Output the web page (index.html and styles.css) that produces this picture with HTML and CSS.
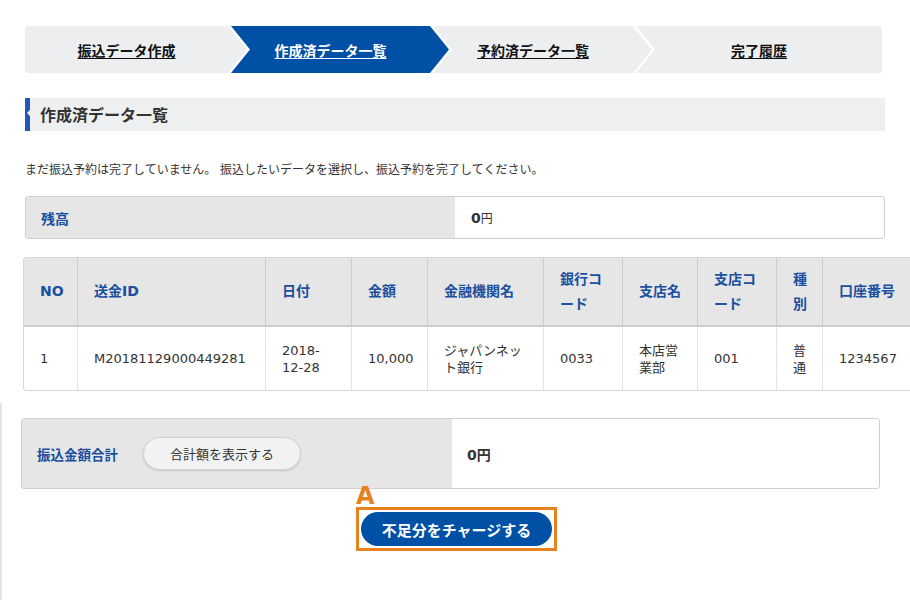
FILE: index.html
```html
<!DOCTYPE html>
<html lang="ja">

<head>
    <meta charset="UTF-8">
    <meta name="viewport" content="width=device-width, initial-scale=1.0">
    <title>作成済データ一覧</title>
    <link rel="stylesheet" href="styles.css">
</head>

<body>
    <div class="page">
        <nav class="steps">
            <a class="step step-first" href="#"><span>振込データ作成</span></a>
            <a class="step step-mid step-active" href="#"><span>作成済データ一覧</span></a>
            <a class="step step-mid" href="#"><span>予約済データ一覧</span></a>
            <a class="step step-last" href="#"><span>完了履歴</span></a>
        </nav>

        <h2 class="heading">作成済データ一覧</h2>

        <p class="lead">まだ振込予約は完了していません。 振込したいデータを選択し、振込予約を完了してください。</p>

        <div class="balance">
            <div class="balance-label">残高</div>
            <div class="balance-value"><b>0</b>円</div>
        </div>

        <div class="table-wrap">
            <table class="list">
                <colgroup>
                    <col style="width: 54px">
                    <col style="width: 188px">
                    <col style="width: 86px">
                    <col style="width: 76px">
                    <col style="width: 116px">
                    <col style="width: 79px">
                    <col style="width: 75px">
                    <col style="width: 79px">
                    <col style="width: 46px">
                    <col style="width: 110px">
                </colgroup>
                <thead>
                    <tr>
                        <th>NO</th>
                        <th>送金ID</th>
                        <th>日付</th>
                        <th>金額</th>
                        <th>金融機関名</th>
                        <th>銀行コード</th>
                        <th>支店名</th>
                        <th>支店コード</th>
                        <th>種別</th>
                        <th>口座番号</th>
                    </tr>
                </thead>
                <tbody>
                    <tr>
                        <td>1</td>
                        <td>M20181129000449281</td>
                        <td>2018-<wbr>12-28</td>
                        <td>10,000</td>
                        <td>ジャパンネット銀行</td>
                        <td>0033</td>
                        <td>本店営業部</td>
                        <td>001</td>
                        <td>普通</td>
                        <td>1234567</td>
                    </tr>
                </tbody>
            </table>
        </div>
    </div>

    <div class="summary">
        <div class="total">
            <div class="total-label">
                <span>振込金額合計</span>
                <button class="btn-sum">合計額を表示する</button>
            </div>
            <div class="total-value">0円</div>
        </div>

        <div class="charge-area">
            <div class="charge">
                <div class="mark">A</div>
                <div class="mark-box">
                    <button class="btn-charge">不足分をチャージする</button>
                </div>
            </div>
        </div>
    </div>
</body>

</html>
```

FILE: styles.css
```css
html, body {
    overflow-x: hidden;
}
body {
    margin: 0;
    font-family: "DejaVu Sans", "Noto Sans CJK JP", sans-serif;
    color: #333;
    background-color: #fff;
}
.page {
    padding: 26px 25px 0;
}

/* step bar */
.steps {
    display: flex;
    height: 47px;
    margin-right: 3px;
    border-radius: 3px;
    overflow: hidden;
}
.step {
    display: flex;
    align-items: center;
    justify-content: center;
    background-color: #edeef0;
    color: #111;
    font-family: "Noto Sans CJK JP", sans-serif;
    font-size: 14px;
    font-weight: bold;
    text-decoration: none;
}
.step span {
    text-decoration: underline;
    text-underline-offset: 2px;
}
.step-first {
    width: 222px;
    padding-right: 19px;
    box-sizing: border-box;
    clip-path: polygon(0 0, calc(100% - 19px) 0, 100% 50%, calc(100% - 19px) 100%, 0 100%);
}
.step-mid {
    width: 218px;
    margin-left: -16px;
    padding-right: 19px;
    box-sizing: border-box;
    clip-path: polygon(0 0, calc(100% - 19px) 0, 100% 50%, calc(100% - 19px) 100%, 0 100%, 19px 50%);
}
.step-mid + .step-mid {
    width: 219px;
}
.step-last {
    flex: 1;
    margin-left: -16px;
    clip-path: polygon(0 0, 100% 0, 100% 100%, 0 100%, 19px 50%);
}
.step-active {
    background-color: #0050a5;
    color: #fff;
}

/* page heading */
.heading {
    position: relative;
    margin: 25px 0 0;
    height: 33px;
    line-height: 33px;
    padding-left: 10px;
    border-left: 5px solid #2357b6;
    background-color: #eeeff0;
    font-family: "Noto Sans CJK JP", sans-serif;
    font-size: 16px;
    color: #333;
}
.heading::before {
    content: "";
    position: absolute;
    left: -3px;
    top: 12px;
    border-style: solid;
    border-width: 3px 3px 3px 0;
    border-color: transparent #fff transparent transparent;
}

.lead {
    margin: 30px 0 0;
    font-size: 12px;
    line-height: 18px;
}

/* balance */
.balance {
    display: flex;
    margin-top: 17px;
    height: 43px;
    box-sizing: border-box;
    border: 1px solid #cfcfcf;
    border-radius: 3px;
    overflow: hidden;
}
.balance-label {
    width: 429px;
    box-sizing: border-box;
    padding-left: 15px;
    display: flex;
    align-items: center;
    background-color: #e6e6e6;
    color: #1b4f9f;
    font-weight: bold;
    font-size: 14px;
}
.balance-value {
    flex: 1;
    padding-left: 16px;
    display: flex;
    align-items: center;
    font-size: 12px;
}
.balance-value b {
    font-size: 14px;
}

/* table */
.table-wrap {
    margin: 18px 0 0 -2px;
}
.list {
    width: 909px;
    table-layout: fixed;
    border-collapse: separate;
    border-spacing: 0;
    border: 1px solid #d6d6d6;
    border-radius: 3px;
}
.list th {
    height: 67px;
    padding: 0 16px;
    text-align: left;
    background-color: #e6e6e6;
    color: #1b4f9f;
    font-size: 14px;
    line-height: 25px;
    border-right: 1px solid #cdcdcd;
    border-bottom: 2px solid #cdcdcd;
}
.list td {
    height: 63px;
    padding: 0 16px;
    font-size: 13px;
    line-height: 17px;
    border-right: 1px solid #e3e3e3;
}
.list th:last-child,
.list td:last-child {
    border-right: none;
}

/* summary */
.summary {
    margin-top: 12px;
    padding: 15px 0 0 19px;
    min-height: 185px;
    border-left: 2px solid #e1e5ea;
}
.total {
    display: flex;
    width: 859px;
    height: 71px;
    box-sizing: border-box;
    border: 1px solid #cfcfcf;
    border-radius: 3px;
    overflow: hidden;
}
.total-label {
    width: 430px;
    box-sizing: border-box;
    padding-left: 15px;
    display: flex;
    align-items: center;
    gap: 25px;
    background-color: #e6e6e6;
    color: #1b4f9f;
    font-weight: bold;
    font-size: 13.5px;
}
.btn-sum {
    height: 33px;
    padding: 0 26px;
    border: 1px solid #d2d2d2;
    border-radius: 17px;
    background-color: #f2f2f2;
    box-shadow: 0 1px 2px rgba(0, 0, 0, 0.15);
    color: #333;
    font-family: "Noto Sans CJK JP", sans-serif;
    font-size: 13px;
    cursor: pointer;
}
.total-value {
    flex: 1;
    padding-left: 15px;
    display: flex;
    align-items: center;
    font-weight: bold;
    font-size: 14px;
}

.charge-area {
    display: flex;
    justify-content: center;
    padding-right: 18px;
}
.mark {
    margin-top: -1px;
    color: #e8821f;
    font-size: 24px;
    font-weight: bold;
    line-height: 17px;
}
.mark-box {
    margin-top: 2px;
    padding: 2px;
    border: 3px solid #e8821f;
}
.btn-charge {
    display: block;
    width: 191px;
    height: 34px;
    border: none;
    border-radius: 17px;
    background-color: #0050a5;
    color: #fff;
    font-family: "Noto Sans CJK JP", sans-serif;
    font-size: 15px;
    font-weight: bold;
    cursor: pointer;
}
```
